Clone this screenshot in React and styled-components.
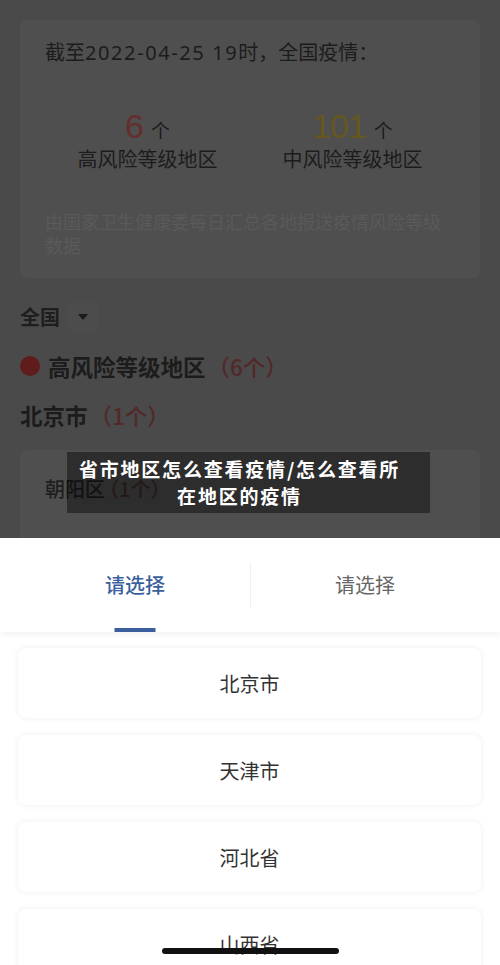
import React from 'react'
import styled, { createGlobalStyle } from 'styled-components'

const GlobalStyle = createGlobalStyle`
  html, body {
    margin: 0;
    padding: 0;
    background: #4a4a4a;
  }
  body {
    font-family: "Noto Sans CJK SC", "Noto Sans", sans-serif;
  }
  * {
    box-sizing: border-box;
  }
`

const Screen = styled.div`
  position: relative;
  width: 500px;
  height: 965px;
  display: flex;
  flex-direction: column;
  overflow: hidden;
`

/* dimmed page behind the picker sheet */
const Backdrop = styled.div`
  position: relative;
  height: 538px;
  flex: none;
  background: #4a4a4a;
  padding: 20px 20px 0;
  overflow: hidden;
  display: flex;
  flex-direction: column;
`

const SummaryCard = styled.div`
  background: #4f4f4f;
  border-radius: 6px;
  padding: 17px 25px 0;
  height: 258px;
  flex: none;
`

const Headline = styled.div`
  font-size: 20px;
  line-height: 30px;
  color: #1c1c1c;
`

const Date = styled.span`
  font-family: "Noto Sans", sans-serif;
  letter-spacing: 1.6px;
`

const StatRow = styled.div`
  display: grid;
  grid-template-columns: 1fr 1fr;
  margin-top: 38px;
`

const Stat = styled.div`
  display: flex;
  flex-direction: column;
  align-items: center;
`

const StatValue = styled.div`
  display: flex;
  align-items: baseline;
  gap: 8px;
  height: 40px;
`

const Number = styled.span`
  font-family: "Liberation Sans", "Noto Sans", sans-serif;
  font-size: 34px;
  line-height: 40px;
  letter-spacing: -1px;
  color: ${(p) => p.$color};
`

const Unit = styled.span`
  font-size: 19px;
  color: #1c1c1c;
`

const StatLabel = styled.div`
  font-size: 20px;
  line-height: 30px;
  color: #1c1c1c;
  margin-top: -2px;
`

const Note = styled.div`
  margin-top: 35px;
  font-size: 18px;
  line-height: 24px;
  color: #5a5a5a;
`

const Scope = styled.div`
  display: flex;
  align-items: center;
  gap: 8px;
  margin-top: 23px;
  font-size: 20px;
  font-weight: 600;
  line-height: 32px;
  color: #1e1e1e;
`

const CaretBox = styled.span`
  width: 30px;
  height: 30px;
  border-radius: 4px;
  background: #4c4c4c;
  display: flex;
  align-items: center;
  justify-content: center;
`

const Caret = styled.span`
  width: 0;
  height: 0;
  border-left: 5px solid transparent;
  border-right: 5px solid transparent;
  border-top: 6px solid #1a1a1a;
`

const Heading = styled.div`
  display: flex;
  align-items: center;
  gap: 8px;
  margin-top: ${(p) => p.$gap}px;
  font-size: 22.5px;
  font-weight: 600;
  line-height: 32px;
  color: #1c1c1c;
`

const Dot = styled.span`
  width: 20px;
  height: 20px;
  border-radius: 50%;
  background: #601b1b;
  flex: none;
`

const Count = styled.span`
  color: ${(p) => p.$color || '#522828'};
  font-weight: 500;
  margin-left: -6px;
`

const DistrictCard = styled.div`
  margin-top: 19px;
  background: #4f4f4f;
  border-radius: 6px;
  padding: 24px 25px;
  height: 120px;
  flex: none;
  font-size: 20px;
  font-weight: 500;
  line-height: 30px;
  color: #1e1e1e;
`

/* video caption stamped over the page */
const Caption = styled.div`
  position: absolute;
  left: 67px;
  top: 452px;
  width: 363px;
  height: 61px;
  background: rgba(0, 0, 0, 0.42);
  padding: 3px 26px 0 8px;
  text-align: center;
  color: #fff;
  font-size: 19px;
  font-weight: 700;
  line-height: 27px;
  letter-spacing: 1.8px;
  white-space: nowrap;
`

const Sheet = styled.div`
  flex: 1;
  background: #fff;
  display: flex;
  flex-direction: column;
  overflow: hidden;
`

const Tabs = styled.div`
  position: relative;
  height: 94px;
  flex: none;
  display: grid;
  grid-template-columns: 1fr 1fr;
  padding: 0 20px;
  box-shadow: 0 3px 6px rgba(0, 0, 0, 0.05);
  z-index: 1;
`

const Tab = styled.div`
  position: relative;
  display: flex;
  align-items: center;
  justify-content: center;
  font-size: 20px;
  color: ${(p) => (p.$active ? '#3b5f9c' : '#666')};
  font-weight: ${(p) => (p.$active ? 500 : 400)};
  padding-bottom: 2px;
`

const TabDivider = styled.span`
  position: absolute;
  left: 250px;
  top: 24px;
  width: 1px;
  height: 46px;
  background: #f0f0f0;
`

const Indicator = styled.span`
  position: absolute;
  bottom: 0;
  left: 50%;
  transform: translateX(-50%);
  width: 41px;
  height: 4px;
  background: #3b5f9c;
`

const List = styled.div`
  display: flex;
  flex-direction: column;
  gap: 17px;
  padding: 16px 19px 0 18px;
`

const Item = styled.div`
  height: 70px;
  flex: none;
  border-radius: 8px;
  background: #fff;
  box-shadow: 0 0 6px rgba(0, 0, 0, 0.07);
  display: flex;
  align-items: center;
  justify-content: center;
  font-size: 20px;
  color: #333;
`

const HomeBar = styled.span`
  position: absolute;
  left: 162px;
  bottom: 11px;
  width: 177px;
  height: 6px;
  border-radius: 3px;
  background: #111;
`

const provinces = ['北京市', '天津市', '河北省', '山西省']

export default function App() {
  return (
    <>
      <GlobalStyle />
      <Screen>
        <Backdrop>
          <SummaryCard>
            <Headline>
              截至<Date>2022-04-25 19</Date>时，全国疫情：
            </Headline>
            <StatRow>
              <Stat>
                <StatValue>
                  <Number $color="#652e2e">6</Number>
                  <Unit>个</Unit>
                </StatValue>
                <StatLabel>高风险等级地区</StatLabel>
              </Stat>
              <Stat>
                <StatValue>
                  <Number $color="#665720">101</Number>
                  <Unit>个</Unit>
                </StatValue>
                <StatLabel>中风险等级地区</StatLabel>
              </Stat>
            </StatRow>
            <Note>由国家卫生健康委每日汇总各地报送疫情风险等级数据</Note>
          </SummaryCard>
          <Scope>
            全国
            <CaretBox>
              <Caret />
            </CaretBox>
          </Scope>
          <Heading $gap={17}>
            <Dot />
            高风险等级地区<Count>（6个）</Count>
          </Heading>
          <Heading $gap={17}>
            北京市<Count>（1个）</Count>
          </Heading>
          <DistrictCard>
            朝阳区<Count $color="#3e2a2a">（1个）</Count>
          </DistrictCard>
          <Caption>
            省市地区怎么查看疫情/怎么查看所
            <br />
            在地区的疫情
          </Caption>
        </Backdrop>
        <Sheet>
          <Tabs>
            <Tab $active>
              请选择
              <Indicator />
            </Tab>
            <Tab>请选择</Tab>
            <TabDivider />
          </Tabs>
          <List>
            {provinces.map((name) => (
              <Item key={name}>{name}</Item>
            ))}
          </List>
        </Sheet>
        <HomeBar />
      </Screen>
    </>
  )
}
